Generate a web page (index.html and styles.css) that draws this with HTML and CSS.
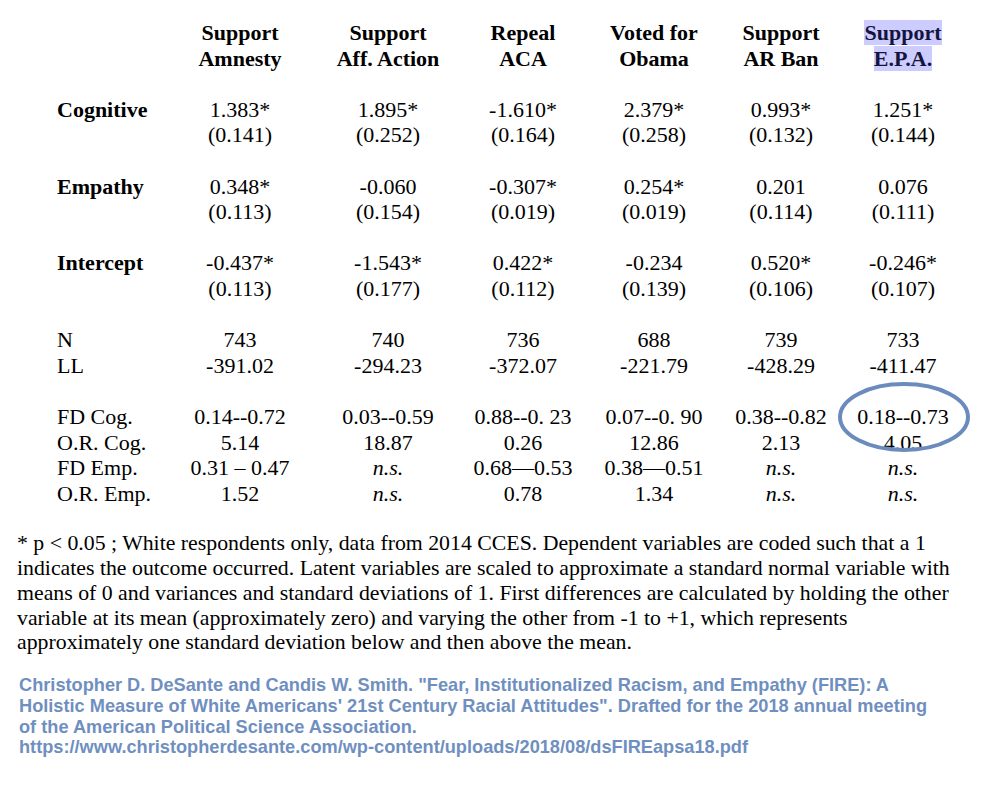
FILE: index.html
```html
<!DOCTYPE html>
<html>
<head>
<meta charset="utf-8">
<link rel="stylesheet" href="styles.css">
</head>
<body>
<div class="page">
  <div class="results">
    <div class="section head">
      <div></div>
      <div>Support<br>Amnesty</div>
      <div>Support<br>Aff. Action</div>
      <div>Repeal<br>ACA</div>
      <div>Voted for<br>Obama</div>
      <div>Support<br>AR Ban</div>
      <div><span class="hl">Support</span><br><span class="hl">E.P.A.</span></div>
    </div>
    <div class="section">
      <div class="label bold">Cognitive</div>
      <div>1.383*<br>(0.141)</div>
      <div>1.895*<br>(0.252)</div>
      <div>-1.610*<br>(0.164)</div>
      <div>2.379*<br>(0.258)</div>
      <div>0.993*<br>(0.132)</div>
      <div>1.251*<br>(0.144)</div>
    </div>
    <div class="section">
      <div class="label bold">Empathy</div>
      <div>0.348*<br>(0.113)</div>
      <div>-0.060<br>(0.154)</div>
      <div>-0.307*<br>(0.019)</div>
      <div>0.254*<br>(0.019)</div>
      <div>0.201<br>(0.114)</div>
      <div>0.076<br>(0.111)</div>
    </div>
    <div class="section">
      <div class="label bold">Intercept</div>
      <div>-0.437*<br>(0.113)</div>
      <div>-1.543*<br>(0.177)</div>
      <div>0.422*<br>(0.112)</div>
      <div>-0.234<br>(0.139)</div>
      <div>0.520*<br>(0.106)</div>
      <div>-0.246*<br>(0.107)</div>
    </div>
    <div class="section">
      <div class="label">N</div>
      <div>743</div><div>740</div><div>736</div><div>688</div><div>739</div><div>733</div>
      <div class="label">LL</div>
      <div>-391.02</div><div>-294.23</div><div>-372.07</div><div>-221.79</div><div>-428.29</div><div>-411.47</div>
    </div>
    <div class="section">
      <div class="label">FD Cog.</div>
      <div>0.14--0.72</div><div>0.03--0.59</div><div>0.88--0. 23</div><div>0.07--0. 90</div><div>0.38--0.82</div><div>0.18--0.73</div>
      <div class="label">O.R. Cog.</div>
      <div>5.14</div><div>18.87</div><div>0.26</div><div>12.86</div><div>2.13</div><div>4.05</div>
      <div class="label">FD Emp.</div>
      <div>0.31 – 0.47</div><div><i>n.s.</i></div><div>0.68—0.53</div><div>0.38—0.51</div><div><i>n.s.</i></div><div><i>n.s.</i></div>
      <div class="label">O.R. Emp.</div>
      <div>1.52</div><div><i>n.s.</i></div><div>0.78</div><div>1.34</div><div><i>n.s.</i></div><div><i>n.s.</i></div>
    </div>
    <svg class="circle" width="140" height="80" viewBox="0 0 140 80">
      <ellipse cx="70" cy="40" rx="64" ry="33" fill="none" stroke="#6c8bbd" stroke-width="4"/>
    </svg>
  </div>
  <p class="note">* p &lt; 0.05 ; White respondents only, data from 2014 CCES. Dependent variables are coded such that a 1<br>indicates the outcome occurred. Latent variables are scaled to approximate a standard normal variable with<br>means of 0 and variances and standard deviations of 1. First differences are calculated by holding the other<br>variable at its mean (approximately zero) and varying the other from -1 to +1, which represents<br>approximately one standard deviation below and then above the mean.</p>
  <p class="cite">Christopher D. DeSante and Candis W. Smith. "Fear, Institutionalized Racism, and Empathy (FIRE): A<br>Holistic Measure of White Americans' 21st Century Racial Attitudes". Drafted for the 2018 annual meeting<br>of the American Political Science Association.<br>https://www.christopherdesante.com/wp-content/uploads/2018/08/dsFIREapsa18.pdf</p>
</div>
</body>
</html>
```

FILE: styles.css
```css
html, body {
  margin: 0;
  padding: 0;
  background: #ffffff;
}
.page {
  width: 1003px;
  height: 798px;
  overflow: hidden;
  font-family: "Liberation Serif", "DejaVu Serif", serif;
  color: #000;
}
.results {
  position: relative;
  padding: 20px 0 0 57px;
  display: flex;
  flex-direction: column;
  gap: 25.6px;
  font-size: 22px;
  line-height: 25.6px;
}
.section {
  display: grid;
  grid-template-columns: 109px 148px 148px 122px 140px 114px 130px;
  text-align: center;
  white-space: nowrap;
}
.section .label {
  text-align: left;
}
.bold, .head {
  font-weight: bold;
}
.hl {
  background: #ccccff;
  color: #14143c;
}
.circle {
  position: absolute;
  left: 834px;
  top: 377px;
}
.note {
  margin: 25px 0 0 17px;
  font-size: 21.8px;
  line-height: 24.8px;
  white-space: nowrap;
}
.cite {
  margin: 20px 0 0 19px;
  font-family: "Liberation Sans", Arial, sans-serif;
  font-weight: bold;
  font-size: 18.2px;
  line-height: 20.7px;
  color: #6f8fc0;
  white-space: nowrap;
}
```
